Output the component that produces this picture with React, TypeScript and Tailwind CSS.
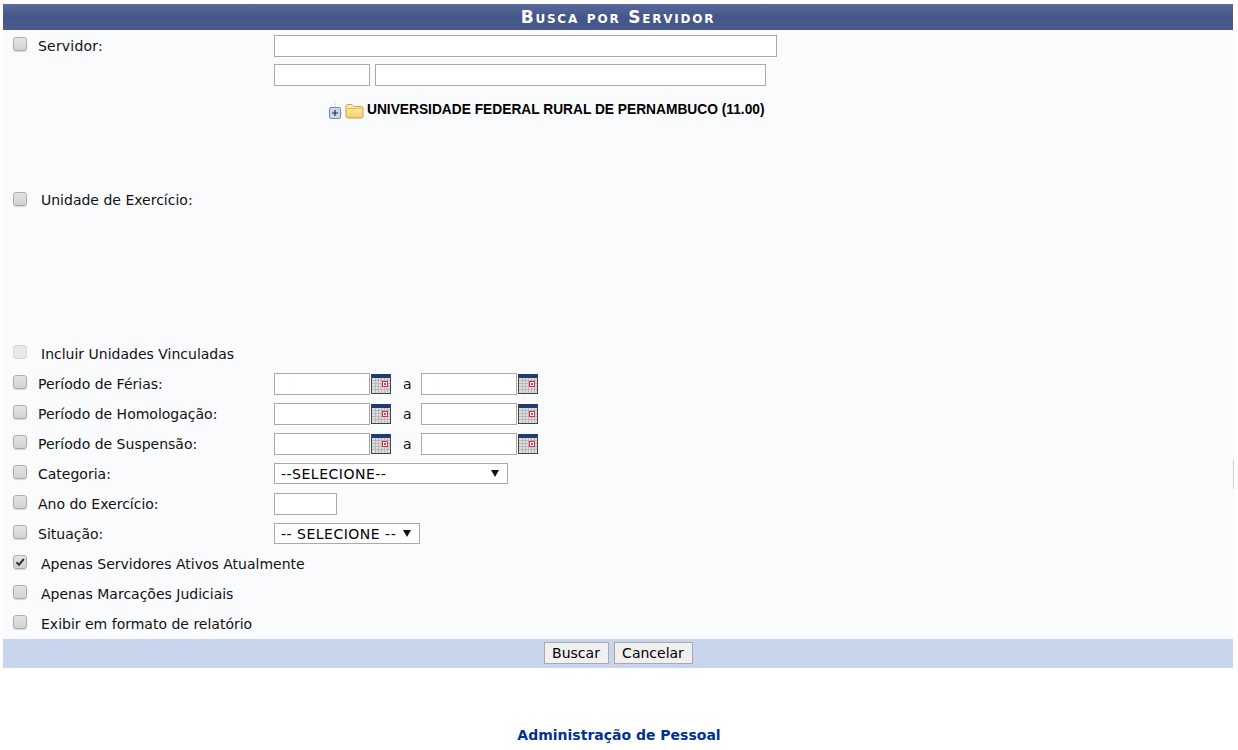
import React from 'react';

const font = "font-['DejaVu_Sans','Liberation_Sans',sans-serif]";

const Checkbox = ({ checked, disabled }: { checked?: boolean; disabled?: boolean }) => (
  <span
    className={`flex h-[14px] w-[14px] shrink-0 items-center justify-center rounded-[3px] border ${
      disabled
        ? 'border-[#d8d8d8] bg-[#e9e9e9]'
        : 'border-[#adadad] bg-gradient-to-b from-[#e4e4e4] to-[#d2d2d2] shadow-[0_1px_1px_rgba(0,0,0,0.15)]'
    }`}
  >
    {checked && (
      <svg width="10" height="10" viewBox="0 0 10 10">
        <path d="M1.5 5.2 L4 7.8 L8.8 2" fill="none" stroke="#333" strokeWidth="2" />
      </svg>
    )}
  </span>
);

const TextBox = ({ className }: { className: string }) => (
  <input type="text" className={`box-border block border border-[#a9a9a9] bg-white outline-none ${className}`} />
);

const CalendarIcon = () => (
  <svg width="20" height="20" viewBox="0 0 20 20" className="ml-px shrink-0">
    <rect x="0" y="0" width="20" height="20" fill="#444" />
    <rect x="1" y="1" width="18" height="18" fill="#dedede" />
    <rect x="1" y="0" width="18" height="4" fill="#1f3b73" />
    <path
      d="M4.5 4v15M7.5 4v15M10.5 4v15M13.5 4v15M16.5 4v15M1 6.5h18M1 9.5h18M1 12.5h18M1 15.5h18"
      stroke="#b8b8b8"
      strokeWidth="1"
    />
    <rect x="11.5" y="7.5" width="5" height="5" fill="#fff" stroke="#f0203c" />
    <rect x="13" y="9" width="2" height="2" fill="#e04058" />
  </svg>
);

const DateRange = () => (
  <div className="flex items-center">
    <TextBox className="h-[22px] w-[96px]" />
    <CalendarIcon />
    <span className="ml-[12px] mr-[10px] w-[8px] text-center">a</span>
    <TextBox className="h-[22px] w-[96px]" />
    <CalendarIcon />
  </div>
);

const SelectBox = ({ label, className }: { label: string; className: string }) => (
  <div className={`relative -mt-[2px] h-[21px] ${className}`}>
    <select className="box-border h-full w-full appearance-none rounded-none border border-[#a9a9a9] bg-white pl-[6px] text-[14px] tracking-[0.5px] text-black outline-none">
      <option>{label}</option>
    </select>
    <svg width="8" height="8" viewBox="0 0 8 8" className="pointer-events-none absolute right-[9px] top-[6px]">
      <path d="M0 1 H8 L4 8 Z" fill="#111" />
    </svg>
  </div>
);

const Row = ({
  label,
  wide,
  checked,
  disabled,
  children,
}: {
  label: string;
  wide?: boolean;
  checked?: boolean;
  disabled?: boolean;
  children?: React.ReactNode;
}) => (
  <div className="flex h-[30px] items-center pl-[10px]">
    <div className="-mt-[5px]">
      <Checkbox checked={checked} disabled={disabled} />
    </div>
    <label className={`${wide ? 'ml-[14px]' : 'ml-[11px] w-[236px]'} whitespace-nowrap`}>{label}</label>
    {children}
  </div>
);

const App: React.FC = () => {
  return (
    <div className={`min-h-[750px] bg-white pt-1 text-[14px] text-[#111] ${font}`}>
      <div className="relative ml-[3px] w-[1230px] bg-[#f9fbfd]">
        <h2 className="flex h-[26px] items-center justify-center bg-gradient-to-b from-[#5a6a9a] via-[#44558a] to-[#4a5a8c] pt-[2px] text-[17px] font-bold tracking-[1.8px] text-white [font-variant:small-caps]">
          Busca por Servidor
        </h2>

        {/* thin handle on the right edge */}
        <span className="absolute left-full top-[455px] h-[30px] w-px bg-[#d4d4d4]" />

        <div>
          {/* servidor */}
          <div className="flex pl-[10px] pt-[5px]">
            <div className="mt-[2px]">
              <Checkbox />
            </div>
            <label className="ml-[11px] mt-px w-[236px] tracking-[0.2px]">Servidor:</label>
            <div className="flex flex-col gap-[7px]">
              <TextBox className="h-[22px] w-[503px]" />
              <div className="flex gap-[5px]">
                <TextBox className="h-[22px] w-[96px]" />
                <TextBox className="h-[22px] w-[391px]" />
              </div>
            </div>
          </div>

          {/* unidade de exercicio */}
          <div className="relative flex h-[253px] items-start pl-[10px]">
            <div className="mt-[104px] flex items-center">
              <div className="-mt-[3px]">
                <Checkbox />
              </div>
              <label className="ml-[14px]">Unidade de Exercício:</label>
            </div>
            <div className="absolute left-[325px] top-[14px] flex items-center">
              <svg width="14" height="18" viewBox="0 0 14 18" className="mt-[1px]">
                <path d="M7 0v5M13 11h1" stroke="#c4c4c4" strokeDasharray="1 1" />
                <rect x="1.5" y="5.5" width="11" height="11" rx="1.5" fill="#cdd6e8" stroke="#7e8ba8" />
                <path d="M4 11h6M7 8v6" stroke="#1d2c55" strokeWidth="1.2" />
              </svg>
              <svg width="19" height="16" viewBox="0 0 19 16" className="ml-[3px] mt-[2px]">
                <defs>
                  <linearGradient id="folderFill" x1="0" y1="0" x2="0" y2="1">
                    <stop offset="0" stopColor="#fff0b0" />
                    <stop offset="1" stopColor="#f6d068" />
                  </linearGradient>
                </defs>
                <path
                  d="M1 3.5 Q1 1.5 3 1.5 H7 L9 3.5 H16 Q18 3.5 18 5.5 V13 Q18 15 16 15 H3 Q1 15 1 13 Z"
                  fill="url(#folderFill)"
                  stroke="#c9a04a"
                />
                <path d="M1.5 5.5 H17.5" stroke="#e2bd62" />
              </svg>
              <span className="ml-[3px] whitespace-nowrap font-['Liberation_Sans',sans-serif] text-[13.75px] font-bold text-black">
                UNIVERSIDADE FEDERAL RURAL DE PERNAMBUCO (11.00)
              </span>
            </div>
          </div>

          <Row label="Incluir Unidades Vinculadas" wide disabled />
          <Row label="Período de Férias:">
            <DateRange />
          </Row>
          <Row label="Período de Homologação:">
            <DateRange />
          </Row>
          <Row label="Período de Suspensão:">
            <DateRange />
          </Row>
          <Row label="Categoria:">
            <SelectBox label="--SELECIONE--" className="w-[234px]" />
          </Row>
          <Row label="Ano do Exercício:">
            <TextBox className="h-[22px] w-[63px]" />
          </Row>
          <Row label="Situação:">
            <SelectBox label="-- SELECIONE --" className="w-[146px]" />
          </Row>
          <Row label="Apenas Servidores Ativos Atualmente" wide checked />
          <Row label="Apenas Marcações Judiciais" wide />
          <Row label="Exibir em formato de relatório" wide />
        </div>

        <div className="flex h-[29px] items-start justify-center gap-[5px] bg-[#c9d5ec] pt-[3px]">
          <button className="box-border h-[22px] w-[65px] border border-[#a9a9a9] bg-[#f0f0f0] pb-[1px] text-[14px] text-black">
            Buscar
          </button>
          <button className="box-border h-[22px] w-[79px] border border-[#a9a9a9] bg-[#f0f0f0] pb-[1px] text-[14px] text-black">
            Cancelar
          </button>
        </div>
      </div>

      <p className="mt-[57px] text-center text-[14px] font-bold text-[#003390]">Administração de Pessoal</p>
    </div>
  );
};

export default App;
